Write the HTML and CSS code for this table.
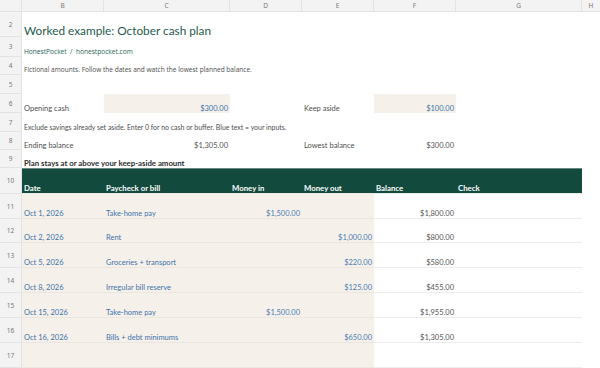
FILE: index.html
```html
<!DOCTYPE html>
<html lang="en">
<head>
<meta charset="utf-8">
<title>Worked example: October cash plan</title>
<link rel="stylesheet" href="styles.css">
</head>
<body>
<div class="sheet">
  <div class="row r-head">
    <div class="rn corner"></div>
    <div class="ch">B</div><div class="ch">C</div><div class="ch">D</div><div class="ch">E</div><div class="ch">F</div><div class="ch">G</div><div class="ch last">H</div>
  </div>
  <div class="row r2">
    <div class="rn">2</div>
    <div class="c span-all title">Worked example: October cash plan</div>
  </div>
  <div class="row r3">
    <div class="rn">3</div>
    <div class="c span-all brand">HonestPocket&nbsp; /&nbsp; honestpocket.com</div>
  </div>
  <div class="row r4">
    <div class="rn">4</div>
    <div class="c span-all note">Fictional amounts. Follow the dates and watch the lowest planned balance.</div>
  </div>
  <div class="row r5">
    <div class="rn">5</div>
  </div>
  <div class="row r6">
    <div class="rn">6</div>
    <div class="c label">Opening cash</div>
    <div class="c num input">$300.00</div>
    <div class="c"></div>
    <div class="c label">Keep aside</div>
    <div class="c num input">$100.00</div>
  </div>
  <div class="row r7">
    <div class="rn">7</div>
    <div class="c span-all note small">Exclude savings already set aside. Enter 0 for no cash or buffer. Blue text = your inputs.</div>
  </div>
  <div class="row r8">
    <div class="rn">8</div>
    <div class="c label">Ending balance</div>
    <div class="c num calc">$1,305.00</div>
    <div class="c"></div>
    <div class="c label">Lowest balance</div>
    <div class="c num calc">$300.00</div>
  </div>
  <div class="row r9">
    <div class="rn">9</div>
    <div class="c span-all status">Plan stays at or above your keep-aside amount</div>
  </div>
  <div class="row r10 thead">
    <div class="rn">10</div>
    <div class="c th">Date</div>
    <div class="c th">Paycheck or bill</div>
    <div class="c th">Money in</div>
    <div class="c th">Money out</div>
    <div class="c th">Balance</div>
    <div class="c th">Check</div>
  </div>

  <div class="row tr">
    <div class="rn">11</div>
    <div class="c in txt">Oct 1, 2026</div>
    <div class="c in txt">Take-home pay</div>
    <div class="c in num blue">$1,500.00</div>
    <div class="c in num blue"></div>
    <div class="c out num calc">$1,800.00</div>
    <div class="c out"></div>
  </div>
  <div class="row tr r24">
    <div class="rn">12</div>
    <div class="c in txt">Oct 2, 2026</div>
    <div class="c in txt">Rent</div>
    <div class="c in num blue"></div>
    <div class="c in num blue">$1,000.00</div>
    <div class="c out num calc">$800.00</div>
    <div class="c out"></div>
  </div>
  <div class="row tr">
    <div class="rn">13</div>
    <div class="c in txt">Oct 5, 2026</div>
    <div class="c in txt">Groceries + transport</div>
    <div class="c in num blue"></div>
    <div class="c in num blue">$220.00</div>
    <div class="c out num calc">$580.00</div>
    <div class="c out"></div>
  </div>
  <div class="row tr">
    <div class="rn">14</div>
    <div class="c in txt">Oct 8, 2026</div>
    <div class="c in txt">Irregular bill reserve</div>
    <div class="c in num blue"></div>
    <div class="c in num blue">$125.00</div>
    <div class="c out num calc">$455.00</div>
    <div class="c out"></div>
  </div>
  <div class="row tr">
    <div class="rn">15</div>
    <div class="c in txt">Oct 15, 2026</div>
    <div class="c in txt">Take-home pay</div>
    <div class="c in num blue">$1,500.00</div>
    <div class="c in num blue"></div>
    <div class="c out num calc">$1,955.00</div>
    <div class="c out"></div>
  </div>
  <div class="row tr">
    <div class="rn">16</div>
    <div class="c in txt">Oct 16, 2026</div>
    <div class="c in txt">Bills + debt minimums</div>
    <div class="c in num blue"></div>
    <div class="c in num blue">$650.00</div>
    <div class="c out num calc">$1,305.00</div>
    <div class="c out"></div>
  </div>
  <div class="row tr">
    <div class="rn">17</div>
    <div class="c in txt"></div>
    <div class="c in txt"></div>
    <div class="c in"></div>
    <div class="c in"></div>
    <div class="c out"></div>
    <div class="c out"></div>
  </div>
</div>
</body>
</html>
```
FILE: styles.css
```css
* { box-sizing: border-box; }
html, body { margin: 0; padding: 0; background: #ffffff; }
body {
  font-family: Lato, "Noto Sans", "Liberation Sans", sans-serif;
  color: #4a4a4a;
  width: 600px;
  height: 368px;
  overflow: hidden;
}
.sheet { display: flex; flex-direction: column; }
.row {
  display: grid;
  grid-template-columns: 22px 82px 126px 72px 72px 82px 126px 18px;
  height: 25px;
}
.r-head { height: 12px; background: #f3f3f3; border-bottom: 1px solid #e2e2e2; }
.r2 { height: 25px; }
.r3 { height: 20px; }
.r4 { height: 18px; }
.r5 { height: 19px; }
.r6 { height: 19px; }
.r7 { height: 19px; }
.r8 { height: 18px; }
.r9 { height: 18px; }
.r10 { height: 26px; }
.r24 { height: 24px; }

.rn {
  background: #f3f3f3;
  border-bottom: 1px solid #e3e3e3;
  border-right: 1px solid #e3e3e3;
  color: #777777;
  font-family: "Noto Sans", "Liberation Sans", sans-serif;
  font-size: 6.5px;
  display: flex;
  align-items: center;
  justify-content: center;
}
.corner { border-bottom: none; }
.ch {
  color: #7a7a7a;
  font-family: "Noto Sans", "Liberation Sans", sans-serif;
  font-size: 6.5px;
  display: flex;
  align-items: center;
  justify-content: center;
  border-right: 1px solid #e3e3e3;
}
.ch.last { border-right: none; }

.c {
  display: flex;
  align-items: flex-end;
  padding: 0 2px 0 2px;
  white-space: nowrap;
  font-size: 7.5px;
  line-height: 1;
  min-width: 0;
}
.span-all { grid-column: 2 / 9; }
.title {
  font-family: Lato, "Open Sans", sans-serif;
  font-size: 11.8px;
  color: #1f5b4d;
  padding-bottom: 0;
  line-height: 0.9;
}
.brand {
  font-family: "Open Sans", "Noto Sans", sans-serif;
  font-size: 6.6px;
  color: #2a6656;
  padding-bottom: 1px;
}
.note {
  font-family: "Open Sans", "Noto Sans", sans-serif;
  font-size: 6.55px;
  color: #4e4e4e;
  padding-bottom: 1px;
}
.note.small { font-family: Lato, sans-serif; font-size: 6.95px; padding-bottom: 1px; }
.label { color: #4f4f4f; padding-bottom: 1px; }
.num { justify-content: flex-end; }
.r6 .c, .r8 .c { padding-bottom: 1px; }
.input { background: #f5f1ea; color: #3d72ab; }
.calc { color: #555555; }
.status { font-weight: 700; color: #2b2b2b; font-size: 7.8px; }

.thead .c.th {
  background: #124a3e;
  color: #ffffff;
  font-weight: 700;
  font-size: 7.8px;
  padding-bottom: 0;
  line-height: 1;
  border-top: 1px solid #6c8a82;
  border-bottom: 1px solid #e8ece9;
}
.tr .c { border-bottom: 1px solid #ebe7e0; padding-bottom: 1px; }
.tr .c.in { background: #f5f1ea; }
.tr .c.out { border-bottom-color: #ececec; }
.txt { color: #3d72ab; }
.blue { color: #4a7db5; }
```
